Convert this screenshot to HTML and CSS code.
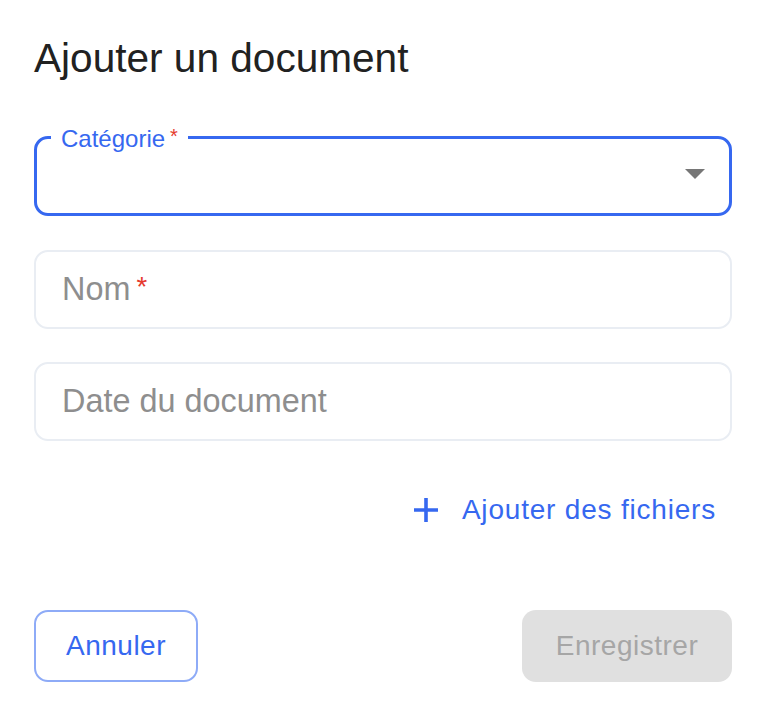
FILE: index.html
```html
<!DOCTYPE html>
<html lang="fr">
<head>
    <meta charset="UTF-8">
    <meta name="viewport" content="width=device-width, initial-scale=1.0">
    <title>Ajouter un document</title>
    <link rel="stylesheet" href="styles.css">
</head>
<body>
    <div class="dialog">
        <h1 class="dialog-title">Ajouter un document</h1>

        <fieldset class="field field-focused">
            <legend>Catégorie<span class="required">*</span></legend>
            <div class="select-body">
                <span class="select-arrow"></span>
            </div>
        </fieldset>

        <div class="field field-text">
            <span class="placeholder">Nom<span class="required">*</span></span>
        </div>

        <div class="field field-text">
            <span class="placeholder">Date du document</span>
        </div>

        <div class="files-row">
            <button class="text-btn">
                <svg width="24" height="24" viewBox="0 0 24 24">
                    <path d="M12 0v24M0 12h24" stroke="currentColor" stroke-width="3.6" fill="none"/>
                </svg>
                Ajouter des fichiers
            </button>
        </div>

        <div class="actions">
            <button class="btn btn-outline">Annuler</button>
            <button class="btn btn-disabled" disabled>Enregistrer</button>
        </div>
    </div>
</body>
</html>
```

FILE: styles.css
```css
body {
    margin: 0;
    font-family: "Liberation Sans", Arial, sans-serif;
    background-color: #fff;
}
.dialog {
    padding: 34px 40px 30px 34px;
}
.dialog-title {
    margin: 0 0 42px 0;
    font-size: 40.6px;
    line-height: 48px;
    font-weight: 400;
    color: #212121;
}
.required {
    color: #e53a2e;
    margin-left: 6px;
    font-size: 0.85em;
    vertical-align: 0.15em;
}
.field {
    box-sizing: border-box;
    border: 2px solid #e9edf3;
    border-radius: 14px;
    height: 79px;
    margin: 0 0 33px 0;
}
.field-focused {
    border: 3.5px solid #3668f0;
    height: 92px;
    margin: 0 0 34px 0;
    padding: 0 0 0 14px;
    min-width: 0;
}
.field-focused legend {
    padding: 0 10px;
    font-size: 24px;
    line-height: 24px;
    color: #3668f0;
}
.field-focused .required {
    font-size: 20px;
    margin-left: 5px;
    vertical-align: 0.2em;
}
.select-body {
    height: 62px;
    display: flex;
    align-items: center;
    justify-content: flex-end;
    padding-right: 24px;
    margin-top: -8px;
}
.select-arrow {
    width: 0;
    height: 0;
    border-left: 10px solid transparent;
    border-right: 10px solid transparent;
    border-top: 10px solid #767676;
}
.field-text {
    display: flex;
    align-items: center;
    padding-left: 26px;
}
.placeholder {
    font-size: 32.4px;
    color: #8e8e8e;
}
.files-row {
    display: flex;
    justify-content: flex-end;
    margin-top: 41px;
}
.text-btn {
    display: flex;
    align-items: center;
    gap: 24px;
    height: 56px;
    padding: 0 16px 0 18px;
    border: none;
    background: none;
    font-family: inherit;
    font-size: 28px;
    letter-spacing: 0.8px;
    color: #3668f0;
    cursor: pointer;
}
.actions {
    display: flex;
    justify-content: space-between;
    margin-top: 72px;
}
.btn {
    box-sizing: border-box;
    height: 72px;
    border-radius: 14px;
    font-family: inherit;
    font-size: 28px;
    letter-spacing: 0.5px;
    cursor: pointer;
}
.btn-outline {
    width: 164px;
    border: 2px solid #8eabf7;
    background-color: #fff;
    color: #3668f0;
}
.btn-disabled {
    width: 210px;
    border: none;
    background-color: #e0e0e0;
    color: #a6a6a6;
    cursor: default;
}
```
